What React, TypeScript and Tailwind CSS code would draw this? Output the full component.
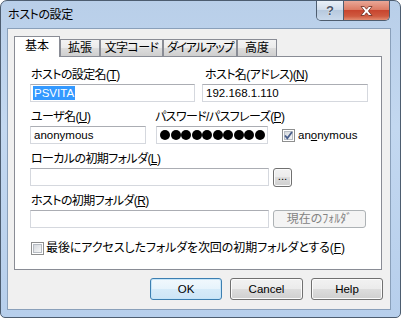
import React from "react";

const F = "font-['Liberation_Sans','Noto_Sans_CJK_JP',sans-serif] [font-feature-settings:'palt']";

function Label({ children, className = "" }: { children: React.ReactNode; className?: string }) {
  return (
    <div className={`h-[13px] leading-[13px] text-[12px] tracking-[-0.6px] whitespace-nowrap text-black ${className}`}>{children}</div>
  );
}

function Field({ children, className = "" }: { children?: React.ReactNode; className?: string }) {
  return (
    <div
      className={`h-[18px] border border-[#d5d8de] border-t-[#abadb3] bg-white flex items-center pl-[2px] text-[11.5px] leading-[13px] overflow-hidden whitespace-nowrap ${className}`}
    >
      {children}
    </div>
  );
}

function Check({ checked = false }: { checked?: boolean }) {
  return (
    <div className="relative w-[13px] h-[13px] shrink-0 border border-[#8e8f8f] bg-white p-[1px]">
      <div className="w-full h-full border border-[#b7bcc3] bg-[linear-gradient(135deg,#d5d9de,#f7f7f7)]" />
      {checked && (
        <svg className="absolute left-0 top-0" width="11" height="11" viewBox="0 0 11 11">
          <path d="M2 5.5 L4.3 8.2 L9 2" fill="none" stroke="#4a5f8c" strokeWidth="1.8" />
        </svg>
      )}
    </div>
  );
}

function Btn({
  children,
  className = "",
  def = false,
}: {
  children: React.ReactNode;
  className?: string;
  def?: boolean;
}) {
  return (
    <div
      className={`h-[22px] rounded-[3px] border flex items-center justify-center text-[11.5px] leading-[13px] text-black ${
        def
          ? "border-[#3c7fb1] shadow-[inset_0_0_0_1px_#c5e5f9] bg-[linear-gradient(#f1f8fd_0%,#e6f3fc_50%,#d6ebf9_50%,#cde5f6_100%)]"
          : "border-[#707070] shadow-[inset_0_0_0_1px_#fbfbfb] bg-[linear-gradient(#f2f2f2_0%,#ebebeb_50%,#dddddd_50%,#cfcfcf_100%)]"
      } ${className}`}
    >
      {children}
    </div>
  );
}

function Tab({ children, selected = false, className = "" }: { children: React.ReactNode; selected?: boolean; className?: string }) {
  if (selected) {
    return (
      <div
        className={`relative z-10 h-[21px] border border-b-0 border-[#898c95] bg-white flex items-start pt-[3px] justify-center text-[12px] leading-[13px] whitespace-nowrap ${className}`}
      >
        {children}
      </div>
    );
  }
  return (
    <div
      className={`h-[18px] border border-[#898c95] bg-[linear-gradient(#f3f3f3_0%,#ebebeb_50%,#dddddd_50%,#cfcfcf_100%)] flex items-start pt-[2px] justify-center text-[12px] leading-[13px] whitespace-nowrap overflow-visible ${className}`}
    >
      {children}
    </div>
  );
}

export default function App() {
  return (
    <div className={`w-[401px] h-[318px] bg-white ${F}`}>
      <div className="w-full h-full rounded-t-[7px] rounded-b-[5px] border border-[#4d5d70] bg-[linear-gradient(#b9cfe9,#c3d8f0_40%,#b7cfec)] flex flex-col overflow-hidden">
        {/* title bar */}
        <div className="h-[27px] flex items-start justify-between">
          <div className="pl-[7px] pt-[8px] text-[12px] leading-[13px] tracking-[-0.4px] text-black">ホストの設定</div>
          <div className="flex h-[20px] mr-[10px] border border-t-0 border-[#4e5d6f] rounded-b-[5px] overflow-hidden">
            <div className="w-[27px] border-r border-[#4e5d6f] bg-[linear-gradient(#e9f0f8,#d2deec_45%,#b7c9de_50%,#c9d9eb)] flex items-center justify-center">
              <span className="text-[13px] leading-[13px] font-bold text-[#4a5567] [text-shadow:0_0_1px_#fff,0_0_1px_#fff]">?</span>
            </div>
            <div className="w-[45px] bg-[linear-gradient(#e9a797,#dc7c65_45%,#c8452f_50%,#cf5a40_80%,#e28d72)] flex items-center justify-center">
              <svg width="13" height="10" viewBox="0 0 13 10">
                <path
                  d="M1 0.5 L4.3 0.5 L6.5 3.2 L8.7 0.5 L12 0.5 L8.4 5 L12 9.5 L8.7 9.5 L6.5 6.8 L4.3 9.5 L1 9.5 L4.6 5 Z"
                  fill="#ffffff"
                  stroke="#6b2a1e"
                  strokeWidth="0.8"
                />
              </svg>
            </div>
          </div>
        </div>

        {/* client */}
        <div className="flex-1 pl-[6px] pr-[9px] pb-[7px] flex">
          <div className="flex-1 border border-[#8aa0ba] bg-[#f0f0f0] pt-[7px] pl-[6px] flex flex-col">
            {/* tabs */}
            <div className="flex items-end -mb-px h-[21px]">
              <Tab selected className="w-[46px]">基本</Tab>
              <Tab className="w-[40px]">拡張</Tab>
              <Tab className="w-[63px] tracking-[-0.6px]">文字コード</Tab>
              <Tab className="w-[74px] tracking-[-1.3px]">ダイアルアップ</Tab>
              <Tab className="w-[40px]">高度</Tab>
            </div>
            {/* panel */}
            <div className="relative w-[368px] h-[214px] border border-[#898c95] bg-white pt-[12px] pl-[15px] flex flex-col">
              {/* row 1 */}
              <div className="flex">
                <div className="w-[165px] flex flex-col">
                  <Label className="pl-px">
                    ホストの設定名(<u>T</u>)
                  </Label>
                  <Field className="mt-[2px]">
                    <span className="bg-[#3399ff] text-white px-px leading-[14px]">PSVITA</span>
                  </Field>
                </div>
                <div className="w-[166px] ml-[7px] flex flex-col">
                  <Label className="pl-[3px] tracking-[-0.2px]">
                    ホスト名(アドレス)(<u>N</u>)
                  </Label>
                  <Field className="mt-[2px] pl-[3px]">192.168.1.110</Field>
                </div>
              </div>
              {/* row 2 */}
              <div className="flex mt-[9px]">
                <div className="w-[116px] flex flex-col">
                  <Label className="pl-px">
                    ユーザ名(<u>U</u>)
                  </Label>
                  <Field className="mt-[2px] pl-[3px]">anonymous</Field>
                </div>
                <div className="w-[112px] ml-[10px] flex flex-col">
                  <Label className="-ml-px">
                    パスワード/パスフレーズ(<u>P</u>)
                  </Label>
                  <Field className="mt-[2px] pl-[3px]">
                    <div className="w-[105px] overflow-hidden flex gap-[0.5px]">
                      {Array.from({ length: 11 }).map((_, i) => (
                        <div key={i} className="w-[10px] h-[10px] shrink-0 rounded-full bg-black" />
                      ))}
                    </div>
                  </Field>
                </div>
                <div className="ml-[14px] mt-[17px] flex items-center h-[15px]">
                  <Check checked />
                  <span className="ml-[3px] text-[11.5px] leading-[13px]">
                    an<u>o</u>nymous
                  </span>
                </div>
              </div>
              {/* row 3 */}
              <div className="flex flex-col mt-[9px]">
                <Label className="pl-px">
                  ローカルの初期フォルダ(<u>L</u>)
                </Label>
                <div className="flex mt-[2px]">
                  <Field className="w-[239px]" />
                  <Btn className="ml-[4px] w-[19px] !h-[19px] items-end pb-[3px] text-[10px]">...</Btn>
                </div>
              </div>
              {/* row 4 */}
              <div className="flex flex-col mt-[8px]">
                <Label className="pl-px">
                  ホストの初期フォルダ(<u>R</u>)
                </Label>
                <div className="flex mt-[2px]">
                  <Field className="w-[239px]" />
                  <div className="ml-[4px] w-[93px] h-[18px] rounded-[3px] border border-[#adb2b5] bg-[#f4f4f4] flex items-center justify-center text-[12px] leading-[13px] text-[#838383] whitespace-nowrap">
                    現在のﾌｫﾙﾀﾞ
                  </div>
                </div>
              </div>
              {/* row 5 */}
              <div className="flex items-center mt-[14px] ml-px">
                <Check />
                <span className="ml-[2px] text-[12px] leading-[13px] tracking-[-0.1px] whitespace-nowrap">
                  最後にアクセスしたフォルダを次回の初期フォルダとする(<u>F</u>)
                </span>
              </div>
            </div>
            {/* buttons */}
            <div className="flex justify-end pr-[7px] mt-[8px]">
              <Btn def className="w-[72px]">OK</Btn>
              <Btn className="w-[73px] ml-[8px]">Cancel</Btn>
              <Btn className="w-[72px] ml-[8px]">Help</Btn>
            </div>
          </div>
        </div>
      </div>
    </div>
  );
}
